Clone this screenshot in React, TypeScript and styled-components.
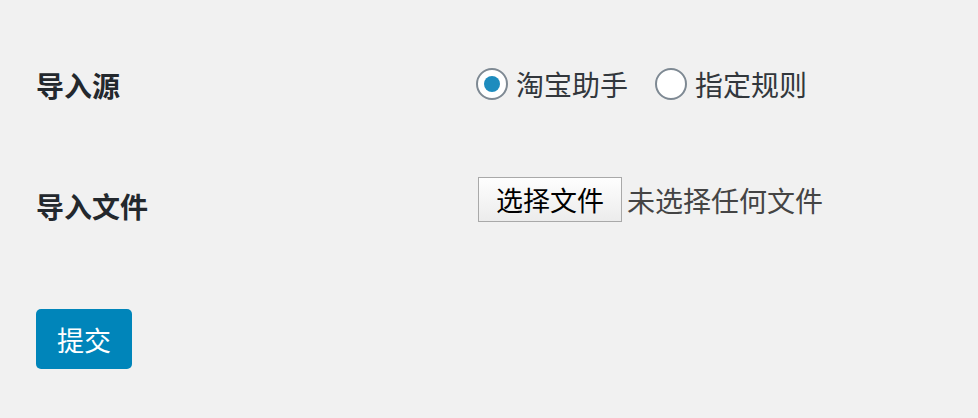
import React from "react";
import styled, { createGlobalStyle } from "styled-components";

const Global = createGlobalStyle`
  html, body { margin: 0; padding: 0; background: #f1f1f1; }
  body { font-family: "Noto Sans CJK SC", "Noto Sans", sans-serif; }
`;

const Page = styled.form`
  padding: 64px 36px 0 36px;
`;

const Row = styled.div<{ $mt: number }>`
  display: flex;
  align-items: flex-start;
  margin-top: ${(p) => p.$mt}px;
`;

const Label = styled.div<{ $mt: number }>`
  width: 440px;
  flex: none;
  font-size: 28px;
  font-weight: 700;
  color: #23282d;
  line-height: 40px;
  margin-top: ${(p) => p.$mt}px;
`;

const Field = styled.div`
  display: flex;
  align-items: center;
  min-height: 40px;
`;

const Option = styled.label`
  display: flex;
  align-items: center;
  font-size: 28px;
  line-height: 40px;
  color: #32373c;
  margin-right: 27px;
`;

const Radio = styled.span<{ $on?: boolean }>`
  width: 32px;
  height: 32px;
  box-sizing: border-box;
  border: 2px solid #7e8993;
  border-radius: 50%;
  background: #fff;
  display: inline-flex;
  align-items: center;
  justify-content: center;
  margin-right: 8px;
  &::after {
    content: "";
    display: ${(p) => (p.$on ? "block" : "none")};
    width: 16px;
    height: 16px;
    border-radius: 50%;
    background: #1e8cbe;
  }
`;

const FileButton = styled.span`
  display: inline-flex;
  align-items: center;
  justify-content: center;
  width: 144px;
  height: 45px;
  box-sizing: border-box;
  border: 1px solid #a9a9a9;
  background: linear-gradient(#fefefe, #ececec);
  font-size: 27px;
  color: #000;
  margin: -1px 5px 0 2px;
`;

const FileText = styled.span`
  font-size: 28px;
  color: #444;
`;

const Submit = styled.button`
  display: block;
  margin-top: 83px;
  width: 96px;
  height: 60px;
  border: none;
  border-radius: 5px;
  background: #0085ba;
  color: #fff;
  font-family: "Noto Sans CJK SC", sans-serif;
  font-size: 27px;
  padding: 0;
`;

export default function App() {
  return (
    <Page onSubmit={(e) => e.preventDefault()}>
      <Global />
      <Row $mt={0}>
        <Label $mt={1}>导入源</Label>
        <Field>
          <Option>
            <Radio $on />
            淘宝助手
          </Option>
          <Option>
            <Radio />
            指定规则
          </Option>
        </Field>
      </Row>
      <Row $mt={73}>
        <Label $mt={8}>导入文件</Label>
        <Field>
          <FileButton>选择文件</FileButton>
          <FileText>未选择任何文件</FileText>
        </Field>
      </Row>
      <Submit type="submit">提交</Submit>
    </Page>
  );
}
